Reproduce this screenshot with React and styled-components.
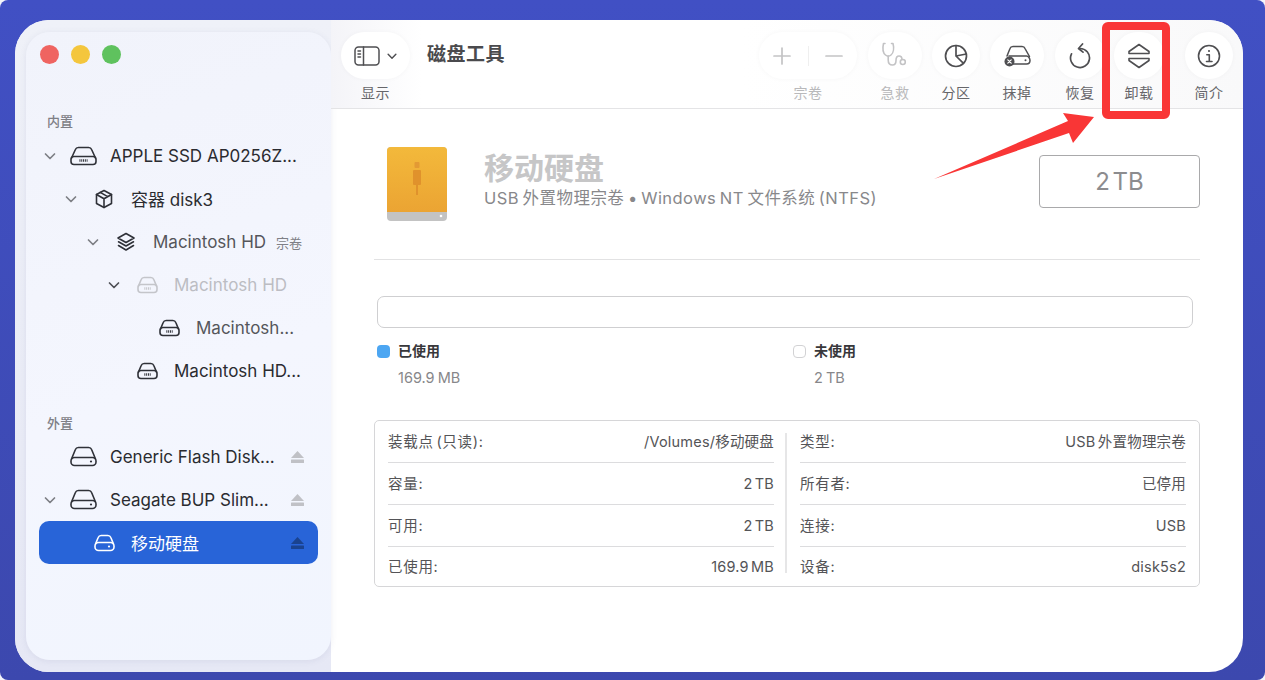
import React from 'react';
import styled, { createGlobalStyle } from 'styled-components';

const sans = `Inter, "Noto Sans CJK SC", sans-serif`;

const Global = createGlobalStyle`
    html, body {
        margin: 0;
        padding: 0;
        background: #f4f5fa;
    }
    * {
        box-sizing: border-box;
    }
`;

const Stage = styled.div`
    position: relative;
    width: 1265px;
    height: 680px;
    padding: 20px 22px 8px 15px;
    border-radius: 8px;
    overflow: hidden;
    background: linear-gradient(180deg, #4150c4 0%, #3c48ae 100%);
    font-family: ${sans};
`;
const Window = styled.div`
    display: flex;
    height: 652px;
    border-radius: 34px;
    overflow: hidden;
    background: #fff;
`;
const SideWrap = styled.div`
    flex: 0 0 316px;
    padding: 12px 0 12px 11px;
    background: linear-gradient(180deg, #eff1f8 0%, #e6e8f5 100%);
`;
const Sidebar = styled.aside`
    height: 628px;
    padding: 13px 13px 0 13px;
    border-radius: 24px;
    background: linear-gradient(160deg, #f1f3fb 0%, #f4f6fe 55%, #f1f5fe 100%);
    box-shadow: 0 1px 6px rgba(80, 90, 140, 0.1);
`;
const Lights = styled.div`
    display: flex;
    gap: 12px;
    padding-left: 1px;
    height: 20px;
`;
const Light = styled.span`
    width: 19px;
    height: 19px;
    border-radius: 50%;
    background: ${p => p.$color};
`;
const Section = styled.div`
    margin: ${p => p.$top}px 0 ${p => p.$bottom}px 8px;
    height: 22px;
    line-height: 22px;
    font-size: 13px;
    font-weight: 500;
    color: #7e7f86;
`;
const Row = styled.div`
    display: flex;
    align-items: center;
    height: 43px;
    padding-left: ${p => p.$indent}px;
    padding-right: 14px;
    border-radius: 10px;
    font-size: 17px;
    color: ${p => p.$selected ? '#fff' : p.$color || '#2a2b30'};
    background: ${p => p.$selected ? '#2864d8' : 'transparent'};
`;
const Chevron = styled.span`
    display: flex;
    width: ${p => p.$gap}px;
    flex: none;
    color: ${p => p.$dark ? '#4e5056' : '#7d7f85'};
`;
const RowIcon = styled.span`
    display: flex;
    justify-content: center;
    flex: none;
    width: 28px;
    margin-right: 13px;
    color: ${p => p.$color || '#2f3138'};
`;
const RowLabel = styled.span`
    flex: 1;
    padding-top: ${p => p.$cjk ? 0 : 1}px;
    padding-bottom: ${p => p.$cjk ? 1 : 0}px;
    white-space: nowrap;
`;
const Tag = styled.span`
    margin-left: 10px;
    font-size: 13px;
    color: #7e7f86;
`;
const Eject = styled.span`
    display: flex;
    color: ${p => p.$selected ? '#1a4390' : '#c0c1c6'};
`;

const Main = styled.main`
    flex: 1;
    min-width: 0;
`;
const Toolbar = styled.header`
    display: flex;
    height: 89px;
    padding: 12px 10px 0 10px;
    border-bottom: 1px solid #e4e4e6;
    background: linear-gradient(90deg, #f4f4f8 0%, #fff 10%, #fff 45%, #f9f9fa 100%);
`;
const Tool = styled.div`
    display: flex;
    flex-direction: column;
    align-items: center;
    flex: none;
    width: ${p => p.$width}px;
    margin-left: ${p => p.$left || 0}px;
`;
const Pill = styled.div`
    display: flex;
    align-items: center;
    justify-content: center;
    gap: ${p => p.$gap || 0}px;
    width: 100%;
    height: 47px;
    border-radius: 24px;
    background: #fff;
    color: ${p => p.$off ? '#c3c3c5' : '#4f4f52'};
    box-shadow: 0 0 5px rgba(0, 0, 0, 0.035);
`;
const ToolLabel = styled.span`
    margin-top: 5px;
    font-size: 14px;
    line-height: 18px;
    letter-spacing: 0.5px;
    white-space: nowrap;
    color: ${p => p.$off ? '#b9b9bb' : '#66666a'};
`;
const AppTitle = styled.h1`
    flex: 1;
    margin: 0 0 0 17px;
    font-size: 19px;
    line-height: 46px;
    height: 46px;
    font-weight: 700;
    letter-spacing: 0.5px;
    color: #4a4a4d;
`;
const PillSep = styled.span`
    width: 1px;
    height: 20px;
    margin: 0 15px 0 16px;
    background: #efefef;
`;
const Content = styled.section`
    padding: 37px 43px 0 43px;
`;
const Head = styled.div`
    display: flex;
    align-items: flex-start;
    height: 114px;
    padding-left: 12px;
    border-bottom: 1px solid #e2e2e3;
`;
const Titles = styled.div`
    flex: 1;
    margin-left: 36px;
`;
const VolumeName = styled.div`
    margin-top: 4px;
    font-size: 30px;
    line-height: 37px;
    font-weight: 700;
    color: #c6c6c7;
`;
const VolumeInfo = styled.div`
    font-size: 16.5px;
    line-height: 22px;
    letter-spacing: 0.45px;
    word-spacing: -1.5px;
    color: #88888b;
`;
const SizeBox = styled.div`
    width: 161px;
    height: 53px;
    margin-top: 9px;
    border: 1px solid #a9a9ab;
    border-radius: 4px;
    text-align: center;
    font-size: 24px;
    line-height: 51px;
    word-spacing: -4px;
    color: #8c8c8f;
`;
const UsageBar = styled.div`
    width: 816px;
    height: 32px;
    margin: 36px 0 0 3px;
    border: 1px solid #cfcfd1;
    border-radius: 7px;
`;
const Legend = styled.div`
    display: flex;
    margin: 14px 0 0 3px;
`;
const LegendItem = styled.div`
    display: grid;
    flex: none;
    grid-template-columns: 12px auto;
    column-gap: 9px;
    align-items: center;
    width: 416px;
`;
const Swatch = styled.span`
    width: 13px;
    height: 13px;
    border-radius: 4px;
    background: ${p => p.$used ? '#4ca6f2' : '#fff'};
    border: ${p => p.$used ? 'none' : '1px solid #d2d2d4'};
`;
const LegendName = styled.span`
    font-size: 14px;
    line-height: 18px;
    font-weight: 600;
    color: #38383b;
`;
const LegendValue = styled.span`
    grid-column: 2;
    margin-top: 9px;
    font-size: 14.5px;
    line-height: 18px;
    word-spacing: -1px;
    color: #87878a;
`;
const InfoTable = styled.div`
    display: grid;
    grid-template-columns: 1fr 1fr;
    height: 167px;
    margin-top: 33px;
    padding: 12px 13px 0;
    border: 1px solid #d6d6d8;
    border-radius: 5px;
`;
const InfoCol = styled.div`
    height: 140px;
    ${p => p.$split && `
        padding-left: 13px;
        margin-left: -2px;
        border-left: 2px solid #e6e6e7;
    `}
    ${p => !p.$split && `padding-right: 13px;`}
`;
const InfoRow = styled.div`
    display: flex;
    justify-content: space-between;
    align-items: flex-start;
    height: 42px;
    padding-top: 12px;
    border-bottom: 1px solid #dcdcde;
    font-size: 14.5px;
    line-height: 18px;
    letter-spacing: 0.2px;
    word-spacing: -2px;
    color: #545457;
    &:first-child {
        height: 30px;
        padding-top: 0;
    }
    &:last-child {
        height: 30px;
        padding-top: 11px;
        border-bottom: none;
    }
`;
const InfoName = styled.span`
    letter-spacing: 0.7px;
`;

// the red marks drawn on top of the screenshot
const Highlight = styled.div`
    position: absolute;
    left: 1102px;
    top: 22px;
    width: 68px;
    height: 97px;
    border: 8px solid #f93636;
    border-radius: 6px;
`;
const ArrowMark = styled.svg`
    position: absolute;
    left: 925px;
    top: 100px;
`;

const Svg = ({ w, h, box, sw = 1.6, children }) => (
    <svg width={w} height={h} viewBox={box} fill="none" stroke="currentColor" strokeWidth={sw} strokeLinecap="round" strokeLinejoin="round">
        {children}
    </svg>
);

const Down = ({ size = 14 }) => (
    <Svg w={size} h={size} box="0 0 14 14" sw={1.7}><path d="M2.5 5 7 9.5 11.5 5" /></Svg>
);

// dome + base bar shared by all the disk icons
const domePath = (w, mid) => {
    const x = w * 0.2;
    return `M1.5 ${mid + 1.5} L${x} 3.5 C${x + 0.5} 2.2 ${x + 1.5} 1.5 ${x + 3} 1.5 H${w - x - 3} C${w - x - 1.5} 1.5 ${w - x - 0.5} 2.2 ${w - x} 3.5 L${w - 1.5} ${mid + 1.5}`;
};

const InternalDisk = ({ w = 27, h = 20 }) => {
    const mid = h - 9.5;
    const cy = (mid + h - 1.5) / 2;
    return (
        <Svg w={w} h={h} box={`0 0 ${w} ${h}`}>
            <path d={domePath(w, mid)} />
            <rect x="1" y={mid} width={w - 2} height={h - mid - 1.5} rx="3" />
            <path d={`M${w * 0.35} ${cy}H${w * 0.65}`} strokeWidth="2.4" strokeLinecap="butt" strokeDasharray="1 .8" />
        </Svg>
    );
};

const ExternalDisk = ({ w = 27, h = 21 }) => {
    const mid = h - 9.5;
    const cy = (mid + h - 1.5) / 2;
    return (
        <Svg w={w} h={h} box={`0 0 ${w} ${h}`}>
            <path d={domePath(w, mid)} />
            <rect x="1" y={mid} width={w - 2} height={h - mid - 1.5} rx="3.5" />
            <circle cx={w - 6} cy={cy} r="1.1" fill="currentColor" stroke="none" />
        </Svg>
    );
};

const Box3d = () => (
    <Svg w={20} h={20} box="0 0 20 20">
        <path d="M10 1.500 17.500 5.500v9L10 18.500 2.500 14.500v-9z" />
        <path d="M2.500 5.500 10 9.800l7.500-4.300M10 9.800v8.700M6.200 3.400l7.500 4.200" />
    </Svg>
);

const Layers = () => (
    <Svg w={20} h={20} box="0 0 20 20">
        <path d="M10 1.500 18 6l-8 4.500L2 6z" />
        <path d="M2.500 9.800 10 14l7.500-4.200M2.500 13.500 10 18l7.500-4.500" />
    </Svg>
);

const EjectIcon = () => (
    <svg width="13" height="12" viewBox="0 0 13 12" fill="currentColor">
        <path d="M6.500 0 13 7H0z" />
        <rect y="8.500" width="13" height="3.500" rx=".5" />
    </svg>
);

const SidebarIcon = () => (
    <Svg w={26} h={20} box="0 0 26 20" sw={1.500}>
        <rect x="1" y="1" width="24" height="18" rx="3.500" />
        <path d="M9.500 1v18M4 5h2.500M4 8h2.500M4 11h2.500" />
    </Svg>
);

const Stethoscope = () => (
    <Svg w={30} h={30} box="0 0 30 30">
        <path d="M5 2.500H3.500C2.500 7 3 12 5.500 14c1.800 1.400 3.800 1.400 5.500 0 2.500-2 3.200-7 2-11.500H11.500" />
        <path d="M8.200 15v4c0 3 1.800 5 4.300 5s3.500-1.800 3.500-4.500 1-4.500 3-4.500 3 1.500 3 3.500" />
        <circle cx="22.800" cy="21" r="2.500" />
    </Svg>
);

const PieIcon = () => (
    <Svg w={24} h={24} box="0 0 24 24" sw={1.700}>
        <circle cx="12" cy="12" r="10.500" />
        <path d="M12 1.500V12l7.500 7.300M12 12l10.300-2" />
    </Svg>
);

const EraseIcon = () => (
    <svg width="27" height="22" viewBox="0 0 27 22" fill="none" stroke="currentColor" strokeWidth="1.500" strokeLinecap="round">
        <path d="M3 11 6 3.500C6.500 2 7.500 1.500 9 1.500h9c1.500 0 2.500.5 3 2l4.500 8" />
        <path d="M7 19h15.500c2 0 3.500-1.500 3.500-3.500S24.500 11 22.500 11H5" />
        <circle cx="21.500" cy="15.200" r="1" fill="currentColor" stroke="none" />
        <circle cx="5.500" cy="16.500" r="5" fill="currentColor" stroke="none" />
        <path d="M3.800 14.800 7.200 18.200M7.200 14.800 3.800 18.200" stroke="#fff" strokeWidth="1.200" />
    </svg>
);

const RestoreIcon = () => (
    <Svg w={22} h={26} box="0 0 22 26" sw={1.700}>
        <path d="M11 5.500a9.500 9.500 0 1 1-8.500 5.300" />
        <path d="M13.500 1 9.500 5.500l4.500 3.700" />
    </Svg>
);

const UnmountIcon = () => (
    <Svg w={24} h={26} box="0 0 24 26" sw={1.600}>
        <path d="M12 1.500 22 8.500V10.500H2V8.500zM12 24.500 22 17.500V15.500H2V17.500z" />
    </Svg>
);

const InfoIcon = () => (
    <Svg w={24} h={24} box="0 0 24 24" sw={1.600}>
        <circle cx="12" cy="12" r="10.500" />
        <path d="M9.800 10.800H12.300V17.500M9.500 17.500h5.500" />
        <circle cx="12" cy="7" r="1.100" fill="currentColor" stroke="none" />
    </Svg>
);

const PlusIcon = () => (
    <Svg w={20} h={20} box="0 0 20 20" sw={1.700}><path d="M10 2v16M2 10h16" /></Svg>
);

const MinusIcon = () => (
    <Svg w={20} h={20} box="0 0 20 20" sw={1.700}><path d="M2 10h16" /></Svg>
);

const UsbDrive = () => (
    <svg width="62" height="76" viewBox="0 0 62 76">
        <defs>
            <linearGradient id="driveBody" x1="0" y1="0" x2="0" y2="1">
                <stop offset="0" stopColor="#f3b93b" />
                <stop offset="1" stopColor="#eba433" />
            </linearGradient>
        </defs>
        <rect x="1" y="1" width="60" height="74" rx="4" fill="#c3c3c3" />
        <path d="M1 5a4 4 0 0 1 4-4h52a4 4 0 0 1 4 4v61H1z" fill="url(#driveBody)" />
        <rect x="28.500" y="16" width="5" height="6" rx="1" fill="#e39a34" />
        <rect x="27" y="24" width="8" height="15" rx="1" fill="#e0922c" />
        <rect x="30" y="39" width="2" height="10" fill="#e0922c" />
        <circle cx="55" cy="70" r="1.300" fill="#fff" />
    </svg>
);

const leftRows = [
    ['装载点 (只读):', '/Volumes/移动硬盘'],
    ['容量:', '2 TB'],
    ['可用:', '2 TB'],
    ['已使用:', '169.9 MB'],
];
const rightRows = [
    ['类型:', 'USB 外置物理宗卷'],
    ['所有者:', '已停用'],
    ['连接:', 'USB'],
    ['设备:', 'disk5s2'],
];

function InfoColumn({ rows, split }) {
    return (
        <InfoCol $split={split}>
            {rows.map(([name, value]) => (
                <InfoRow key={name}>
                    <InfoName>{name}</InfoName>
                    <span>{value}</span>
                </InfoRow>
            ))}
        </InfoCol>
    );
}

function Tree() {
    return (
        <>
            <Section $top={45} $bottom={2}>内置</Section>
            <Row $indent={4}>
                <Chevron $gap={26}><Down /></Chevron>
                <RowIcon><InternalDisk /></RowIcon>
                <RowLabel>APPLE SSD AP0256Z...</RowLabel>
            </Row>
            <Row $indent={25}>
                <Chevron $gap={26}><Down /></Chevron>
                <RowIcon><Box3d /></RowIcon>
                <RowLabel $cjk>容器 disk3</RowLabel>
            </Row>
            <Row $indent={47} $color="#55565b">
                <Chevron $gap={26}><Down /></Chevron>
                <RowIcon><Layers /></RowIcon>
                <RowLabel>Macintosh HD<Tag>宗卷</Tag></RowLabel>
            </Row>
            <Row $indent={68} $color="#bcbdc3">
                <Chevron $gap={26} $dark><Down /></Chevron>
                <RowIcon $color="#c4c5ca"><InternalDisk w={21} h={18} /></RowIcon>
                <RowLabel>Macintosh HD</RowLabel>
            </Row>
            <Row $indent={116} $color="#55565b">
                <RowIcon><InternalDisk w={21} h={18} /></RowIcon>
                <RowLabel>Macintosh...</RowLabel>
            </Row>
            <Row $indent={94}>
                <RowIcon><InternalDisk w={21} h={18} /></RowIcon>
                <RowLabel>Macintosh HD...</RowLabel>
            </Row>
            <Section $top={20} $bottom={1}>外置</Section>
            <Row $indent={4}>
                <Chevron $gap={26} />
                <RowIcon><ExternalDisk /></RowIcon>
                <RowLabel>Generic Flash Disk...</RowLabel>
                <Eject><EjectIcon /></Eject>
            </Row>
            <Row $indent={4}>
                <Chevron $gap={26}><Down /></Chevron>
                <RowIcon><ExternalDisk /></RowIcon>
                <RowLabel>Seagate BUP Slim...</RowLabel>
                <Eject><EjectIcon /></Eject>
            </Row>
            <Row $indent={51} $selected>
                <RowIcon $color="#fff"><ExternalDisk w={21} h={18} /></RowIcon>
                <RowLabel $cjk>移动硬盘</RowLabel>
                <Eject $selected><EjectIcon /></Eject>
            </Row>
        </>
    );
}

export default function App() {
    return (
        <Stage>
            <Global />
            <Window>
                <SideWrap>
                    <Sidebar>
                        <Lights>
                            <Light $color="#ef6461" />
                            <Light $color="#f4c63d" />
                            <Light $color="#5fc25e" />
                        </Lights>
                        <Tree />
                    </Sidebar>
                </SideWrap>
                <Main>
                    <Toolbar>
                        <Tool $width={69}>
                            <Pill $gap={6}>
                                <SidebarIcon />
                                <Down size={12} />
                            </Pill>
                            <ToolLabel>显示</ToolLabel>
                        </Tool>
                        <AppTitle>磁盘工具</AppTitle>
                        <Tool $width={98}>
                            <Pill $off>
                                <PlusIcon />
                                <PillSep />
                                <MinusIcon />
                            </Pill>
                            <ToolLabel $off>宗卷</ToolLabel>
                        </Tool>
                        <Tool $width={54} $left={11}>
                            <Pill $off><Stethoscope /></Pill>
                            <ToolLabel $off>急救</ToolLabel>
                        </Tool>
                        <Tool $width={48} $left={10}>
                            <Pill><PieIcon /></Pill>
                            <ToolLabel>分区</ToolLabel>
                        </Tool>
                        <Tool $width={54} $left={10}>
                            <Pill><EraseIcon /></Pill>
                            <ToolLabel>抹掉</ToolLabel>
                        </Tool>
                        <Tool $width={50} $left={11}>
                            <Pill><RestoreIcon /></Pill>
                            <ToolLabel>恢复</ToolLabel>
                        </Tool>
                        <Tool $width={50} $left={9}>
                            <Pill><UnmountIcon /></Pill>
                            <ToolLabel>卸载</ToolLabel>
                        </Tool>
                        <Tool $width={48} $left={21}>
                            <Pill><InfoIcon /></Pill>
                            <ToolLabel>简介</ToolLabel>
                        </Tool>
                    </Toolbar>
                    <Content>
                        <Head>
                            <UsbDrive />
                            <Titles>
                                <VolumeName>移动硬盘</VolumeName>
                                <VolumeInfo>USB 外置物理宗卷 • Windows NT 文件系统 (NTFS)</VolumeInfo>
                            </Titles>
                            <SizeBox>2 TB</SizeBox>
                        </Head>
                        <UsageBar />
                        <Legend>
                            <LegendItem>
                                <Swatch $used />
                                <LegendName>已使用</LegendName>
                                <LegendValue>169.9 MB</LegendValue>
                            </LegendItem>
                            <LegendItem>
                                <Swatch />
                                <LegendName>未使用</LegendName>
                                <LegendValue>2 TB</LegendValue>
                            </LegendItem>
                        </Legend>
                        <InfoTable>
                            <InfoColumn rows={leftRows} />
                            <InfoColumn rows={rightRows} split />
                        </InfoTable>
                    </Content>
                </Main>
            </Window>
            <Highlight />
            <ArrowMark width="175" height="85" viewBox="0 0 175 85">
                <path d="M9 79 143 21 138 13 169 17 148 43 144 33z" fill="#f93636" />
            </ArrowMark>
        </Stage>
    );
}
